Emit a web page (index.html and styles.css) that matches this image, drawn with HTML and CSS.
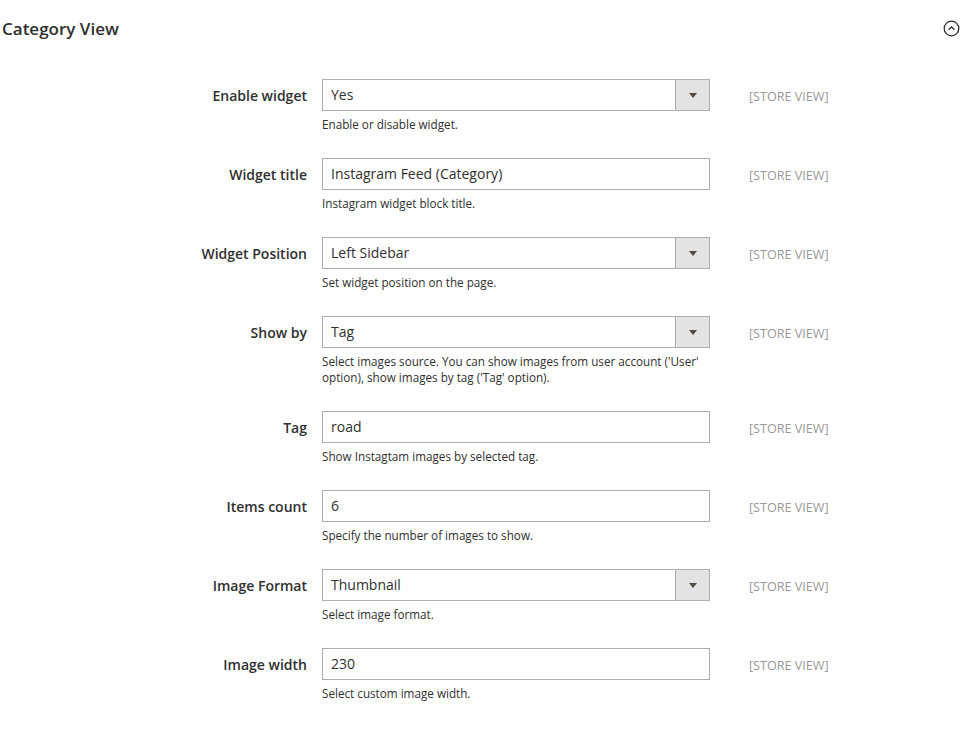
FILE: index.html
```html
<!DOCTYPE html>
<html>
<head>
<meta charset="utf-8">
<link rel="stylesheet" href="styles.css">
</head>
<body>
<div class="section">
  <div class="section-head">
    <h2 class="section-title">Category View</h2>
    <svg class="collapse" width="17" height="17" viewBox="0 0 17 17">
      <circle cx="8.5" cy="8.5" r="7.3" fill="none" stroke="#303030" stroke-width="1.3"/>
      <path d="M5.6 9.8 L8.5 7 L11.4 9.8" fill="none" stroke="#303030" stroke-width="1.3"/>
    </svg>
  </div>
  <div class="fields">
    <div class="field">
      <label class="label">Enable widget</label>
      <div class="control">
        <div class="select"><span class="value">Yes</span><span class="btn"><i class="arrow"></i></span></div>
        <div class="note">Enable or disable widget.</div>
      </div>
      <div class="scope">[STORE VIEW]</div>
    </div>
    <div class="field">
      <label class="label">Widget title</label>
      <div class="control">
        <div class="input">Instagram Feed (Category)</div>
        <div class="note">Instagram widget block title.</div>
      </div>
      <div class="scope">[STORE VIEW]</div>
    </div>
    <div class="field">
      <label class="label">Widget Position</label>
      <div class="control">
        <div class="select"><span class="value">Left Sidebar</span><span class="btn"><i class="arrow"></i></span></div>
        <div class="note">Set widget position on the page.</div>
      </div>
      <div class="scope">[STORE VIEW]</div>
    </div>
    <div class="field">
      <label class="label">Show by</label>
      <div class="control">
        <div class="select"><span class="value">Tag</span><span class="btn"><i class="arrow"></i></span></div>
        <div class="note">Select images source. You can show images from user account ('User' option), show images by tag ('Tag' option).</div>
      </div>
      <div class="scope">[STORE VIEW]</div>
    </div>
    <div class="field">
      <label class="label">Tag</label>
      <div class="control">
        <div class="input">road</div>
        <div class="note">Show Instagtam images by selected tag.</div>
      </div>
      <div class="scope">[STORE VIEW]</div>
    </div>
    <div class="field">
      <label class="label">Items count</label>
      <div class="control">
        <div class="input">6</div>
        <div class="note">Specify the number of images to show.</div>
      </div>
      <div class="scope">[STORE VIEW]</div>
    </div>
    <div class="field">
      <label class="label">Image Format</label>
      <div class="control">
        <div class="select"><span class="value">Thumbnail</span><span class="btn"><i class="arrow"></i></span></div>
        <div class="note">Select image format.</div>
      </div>
      <div class="scope">[STORE VIEW]</div>
    </div>
    <div class="field">
      <label class="label">Image width</label>
      <div class="control">
        <div class="input">230</div>
        <div class="note">Select custom image width.</div>
      </div>
      <div class="scope">[STORE VIEW]</div>
    </div>
  </div>
</div>
</body>
</html>
```
FILE: styles.css
```css
html, body {
  margin: 0;
  padding: 0;
  background: #ffffff;
}
body {
  font-family: "Open Sans", "Liberation Sans", sans-serif;
  color: #303030;
}
.section {
  padding: 0 0 0 2px;
}
.section-head {
  display: flex;
  align-items: center;
  justify-content: space-between;
  height: 56px;
  padding-right: 14px;
}
.section-title {
  margin: 0;
  font-size: 17px;
  font-weight: 600;
  color: #303030;
}
.collapse {
  display: block;
}
.fields {
  padding-top: 23px;
  display: flex;
  flex-direction: column;
  gap: 26px;
}
.field {
  display: grid;
  grid-template-columns: 320px 388px auto;
  column-gap: 0;
  align-items: start;
}
.label {
  text-align: right;
  font-size: 14px;
  font-weight: 600;
  line-height: 32px;
  padding-top: 1px;
  padding-right: 15px;
  color: #303030;
}
.control {
  display: flex;
  flex-direction: column;
}
.input, .select {
  box-sizing: border-box;
  height: 32px;
  border: 1px solid #adadad;
  font-size: 14px;
  line-height: 30px;
  color: #303030;
  background: #fff;
}
.input {
  padding: 0 9px 0 8px;
}
.select {
  display: flex;
}
.select .value {
  flex: 1;
  padding: 0 9px 0 8px;
}
.select .btn {
  width: 33px;
  background: #e3e3e3;
  border-left: 1px solid #adadad;
  display: flex;
  align-items: center;
  justify-content: center;
}
.arrow {
  display: block;
  width: 0;
  height: 0;
  border-left: 4px solid transparent;
  border-right: 4px solid transparent;
  border-top: 5px solid #514943;
  margin-top: 1px;
}
.note {
  margin-top: 5px;
  font-size: 11.7px;
  line-height: 16px;
  color: #303030;
}
.scope {
  padding-left: 39px;
  font-size: 12.6px;
  line-height: 32px;
  padding-top: 2px;
  color: #999999;
}
```
